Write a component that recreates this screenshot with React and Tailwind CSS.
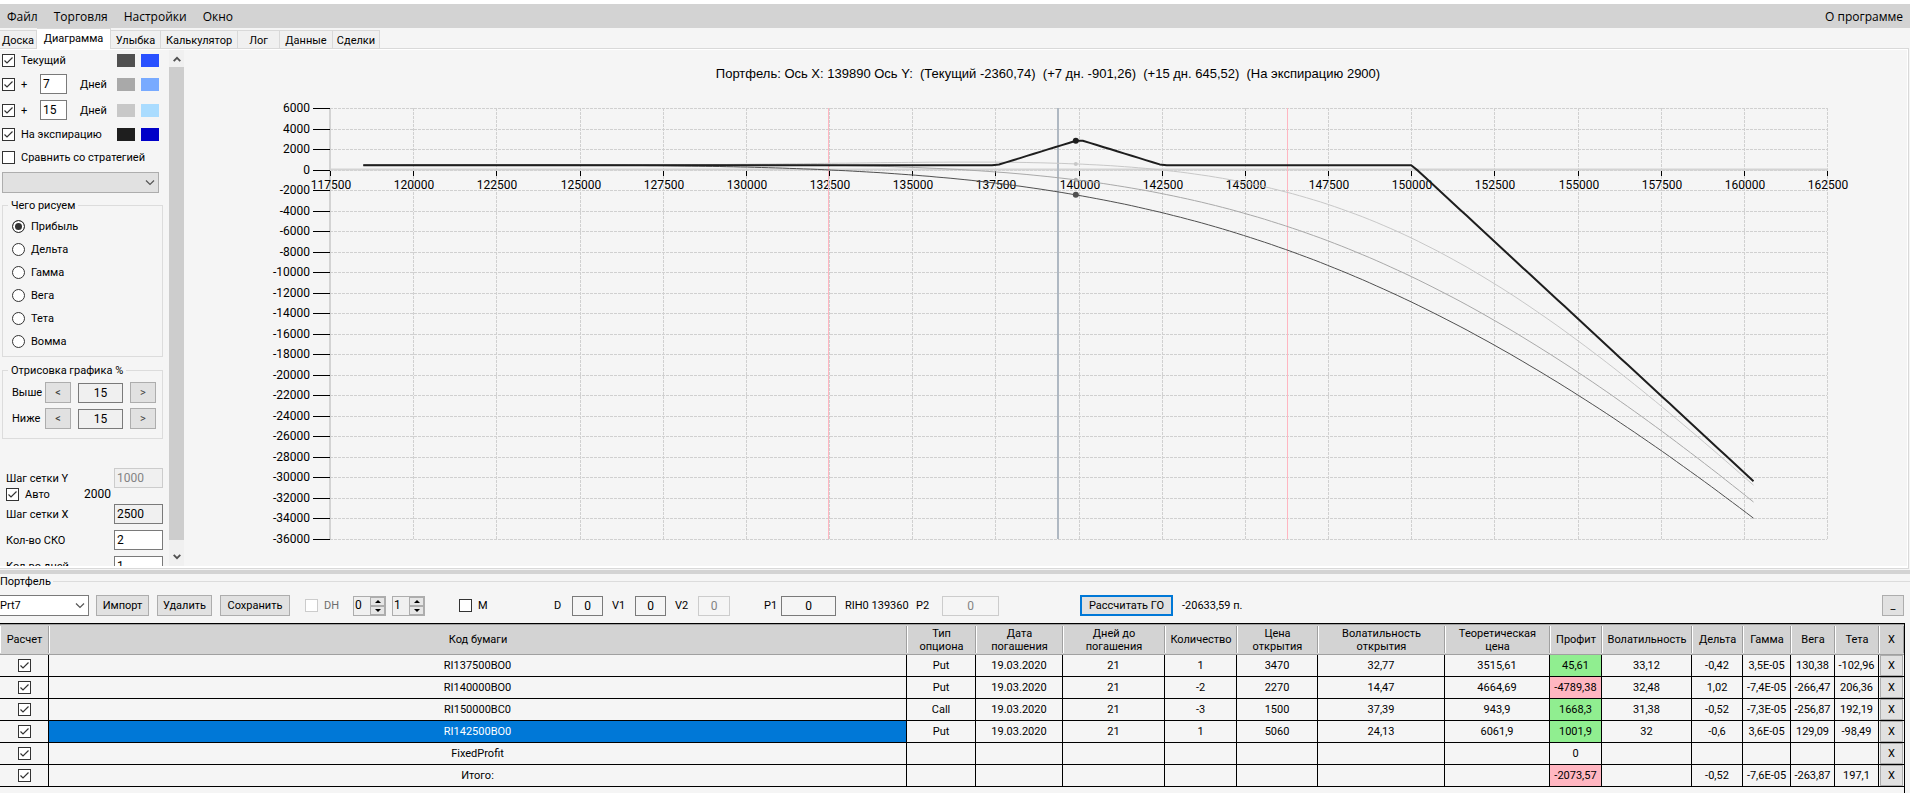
import React from "react";
import clsx from "clsx";

const menu = ["Файл", "Торговля", "Настройки", "Окно"];

const tabs = [
  { title: "Доска", width: "w-[37px]" },
  { title: "Диаграмма", width: "w-[74px]", active: true },
  { title: "Улыбка", width: "w-[50px]" },
  { title: "Калькулятор", width: "w-[77px]" },
  { title: "Лог", width: "w-[42px]" },
  { title: "Данные", width: "w-[53px]" },
  { title: "Сделки", width: "w-[47px]" },
];

const greeks = ["Прибыль", "Дельта", "Гамма", "Вега", "Тета", "Вомма"];

const columns = [
  { title: "Расчет", width: "w-[49px]" },
  { title: "Код бумаги", width: "" },
  { title: "Тип опциона", width: "w-[69px]" },
  { title: "Дата погашения", width: "w-[87px]" },
  { title: "Дней до погашения", width: "w-[102px]" },
  { title: "Количество", width: "w-[72px]" },
  { title: "Цена открытия", width: "w-[81px]" },
  { title: "Волатильность открытия", width: "w-[127px]" },
  { title: "Теоретическая цена", width: "w-[105px]" },
  { title: "Профит", width: "w-[52px]" },
  { title: "Волатильность", width: "w-[90px]" },
  { title: "Дельта", width: "w-[51px]" },
  { title: "Гамма", width: "w-[48px]" },
  { title: "Вега", width: "w-[44px]" },
  { title: "Тета", width: "w-[44px]" },
  { title: "X", width: "w-[25px]" },
];

const PROFIT_COLUMN = 8;

const rows = [
  ["RI137500BO0", "Put", "19.03.2020", "21", "1", "3470", "32,77", "3515,61", "45,61", "33,12", "-0,42", "3,5E-05", "130,38", "-102,96"],
  ["RI140000BO0", "Put", "19.03.2020", "21", "-2", "2270", "14,47", "4664,69", "-4789,38", "32,48", "1,02", "-7,4E-05", "-266,47", "206,36"],
  ["RI150000BC0", "Call", "19.03.2020", "21", "-3", "1500", "37,39", "943,9", "1668,3", "31,38", "-0,52", "-7,3E-05", "-256,87", "192,19"],
  ["RI142500BO0", "Put", "19.03.2020", "21", "1", "5060", "24,13", "6061,9", "1001,9", "32", "-0,6", "3,6E-05", "129,09", "-98,49"],
  ["FixedProfit", "", "", "", "", "", "", "", "0", "", "", "", "", ""],
  ["Итого:", "", "", "", "", "", "", "", "-2073,57", "", "-0,52", "-7,6E-05", "-263,87", "197,1"],
];

const SELECTED_ROW = 3;

const positions = [
  { type: "put", strike: 137500, qty: 1, price: 3470, vol: 0.3312 },
  { type: "put", strike: 140000, qty: -2, price: 2270, vol: 0.3248 },
  { type: "call", strike: 150000, qty: -3, price: 1500, vol: 0.3138 },
  { type: "put", strike: 142500, qty: 1, price: 5060, vol: 0.32 },
];

const normCdf = (x) => {
  const t = 1 / (1 + 0.2316419 * Math.abs(x));
  const poly =
    t * (0.31938153 + t * (-0.356563782 + t * (1.781477937 + t * (-1.821255978 + t * 1.330274429))));
  const tail = 0.3989422804 * Math.exp((-x * x) / 2) * poly;
  return x >= 0 ? 1 - tail : tail;
};

// Black-76, zero rate
const optionPrice = ({ type, strike, vol }, f, days) => {
  const intrinsic = type === "call" ? Math.max(f - strike, 0) : Math.max(strike - f, 0);
  if (days === 0) return intrinsic;
  const sd = vol * Math.sqrt(days / 365);
  const d1 = Math.log(f / strike) / sd + sd / 2;
  const call = f * normCdf(d1) - strike * normCdf(d1 - sd);
  return type === "call" ? call : call - f + strike;
};

const profit = (f, days) =>
  positions.reduce((sum, p) => sum + p.qty * (optionPrice(p, f, days) - p.price), 0);

const CURSOR = 139890;
const X_MIN = 117500;
const X_MAX = 162500;
const LEFT = 145;
const RIGHT = 1642;
const TOP = 58;
const BOTTOM = 489;

const sx = (v) => LEFT + ((v - X_MIN) / (X_MAX - X_MIN)) * (RIGHT - LEFT);
const sy = (v) => TOP + ((6000 - v) / 42000) * (BOTTOM - TOP);

const curvePath = (days) =>
  Array.from({ length: 200 }, (_, i) => {
    const x = 118470 + i * 210;
    return `${i === 0 ? "M" : "L"}${sx(x).toFixed(1)} ${sy(profit(x, days)).toFixed(1)}`;
  }).join(" ");

const curves = [
  { days: 6, color: "#c8c8c8", width: 1, dot: 2 },
  { days: 14, color: "#a9a9a9", width: 1, dot: 2 },
  { days: 21, color: "#505050", width: 1, dot: 3 },
  { days: 0, color: "#1e1e1e", width: 2, dot: 3 },
];

const xTicks = Array.from({ length: 19 }, (_, i) => X_MIN + i * 2500);
const yTicks = Array.from({ length: 22 }, (_, i) => 6000 - i * 2000);

const Chart = () => (
  <svg viewBox="0 0 1722 516" className="w-full h-full block text-[12px]">
    <text x="863" y="28" textAnchor="middle" className="font-['Liberation_Sans',sans-serif] text-[13px] whitespace-pre">
      {"Портфель: Ось X: 139890 Ось Y:  (Текущий -2360,74)  (+7 дн. -901,26)  (+15 дн. 645,52)  (На экспирацию 2900)"}
    </text>

    <g stroke="#d0d0d0" strokeDasharray="3 1" shapeRendering="crispEdges">
      {yTicks.map((v) => (
        <line key={v} x1={LEFT} x2={RIGHT} y1={Math.round(sy(v)) + 0.5} y2={Math.round(sy(v)) + 0.5} />
      ))}
      {xTicks.map((v) => (
        <line key={v} x1={Math.round(sx(v)) + 0.5} x2={Math.round(sx(v)) + 0.5} y1={TOP} y2={BOTTOM} />
      ))}
    </g>
    <g stroke="#d3d3d3" strokeWidth="2">
      <line x1={LEFT} x2={LEFT} y1={TOP} y2={BOTTOM} />
      <line x1={LEFT} x2={RIGHT} y1={sy(0)} y2={sy(0)} />
    </g>

    <g stroke="#000" shapeRendering="crispEdges">
      {yTicks.map((v) => (
        <line key={v} x1={LEFT - 17} x2={LEFT} y1={Math.round(sy(v)) + 0.5} y2={Math.round(sy(v)) + 0.5} />
      ))}
      {xTicks.map((v) => (
        <line key={v} x1={Math.round(sx(v)) + 0.5} x2={Math.round(sx(v)) + 0.5} y1="121" y2="126" />
      ))}
    </g>
    {yTicks.map((v) => (
      <text key={v} x="125" y={Math.round(sy(v)) + 4} textAnchor="end">{v}</text>
    ))}
    {xTicks.map((v) => (
      <text key={v} x={Math.round(sx(v)) + 1} y="139" textAnchor="middle">{v}</text>
    ))}

    {/* current price and the SKO band */}
    <line x1="873" x2="873" y1={TOP} y2={BOTTOM} stroke="#afb8c2" strokeWidth="2" />
    <g stroke="#ffb6c1" shapeRendering="crispEdges">
      <line x1="643.5" x2="643.5" y1={TOP} y2={BOTTOM} />
      <line x1="1102.5" x2="1102.5" y1={TOP} y2={BOTTOM} />
    </g>

    <g transform="translate(1 1)">
      {curves.map((c) => (
        <g key={c.days}>
          <path d={curvePath(c.days)} fill="none" stroke={c.color} strokeWidth={c.width} strokeLinejoin="round" />
          <circle cx={sx(CURSOR)} cy={sy(profit(CURSOR, c.days))} r={c.dot} fill={c.color} />
        </g>
      ))}
    </g>
  </svg>
);

const CheckBox = ({ checked, disabled, ...rest }) => (
  <span className="relative flex w-[13px] h-[13px] flex-shrink-0">
    <input
      type="checkbox"
      defaultChecked={checked}
      disabled={disabled}
      className="peer appearance-none w-[13px] h-[13px] bg-white border border-[#333] disabled:border-[#ccc]"
      {...rest}
    />
    <svg viewBox="0 0 13 13" className="absolute inset-0 hidden peer-checked:block pointer-events-none">
      <path d="M2.5 6.5 L5 9 L10.5 3.5" fill="none" stroke="#333" strokeWidth="1.2" />
    </svg>
  </span>
);

const Chevron = ({ up, className }) => (
  <svg viewBox="0 0 10 6" className={clsx("w-[10px] h-[6px] pointer-events-none", up && "rotate-180", className)}>
    <path d="M1 0.5 L5 4.5 L9 0.5" fill="none" stroke="currentColor" strokeWidth="1.2" />
  </svg>
);

const ScrollArrow = ({ up }) => (
  <svg viewBox="0 0 8 6" className={clsx("w-2 h-[6px]", up && "rotate-180")}>
    <path d="M0.7 0.8 L4 4.2 L7.3 0.8" fill="none" stroke="currentColor" strokeWidth="1.8" />
  </svg>
);

const TextBox = ({ className, ...rest }) => (
  <input
    type="text"
    className={clsx(
      "h-5 border border-[#7a7a7a] text-[12px] disabled:border-[#ccc] disabled:text-[#838383]",
      className
    )}
    {...rest}
  />
);

const Button = ({ className, children, ...rest }) => (
  <button className={clsx("h-[21px] bg-[#e1e1e1] border border-[#adadad] leading-none", className)} {...rest}>
    {children}
  </button>
);

const Swatches = ({ colors }) => (
  <span className="ml-auto mr-1 flex gap-[6px]">
    {colors.map((c) => (
      <span key={c} className="w-[18px] h-[13px]" style={{ background: c }} />
    ))}
  </span>
);

const DaysRow = ({ value, colors }) => (
  <div className="flex items-center h-[26px]">
    <label className="flex items-center w-[38px] gap-[6px]">
      <CheckBox checked /> +
    </label>
    <TextBox defaultValue={value} aria-label="Дней" className="w-[27px] bg-white pl-[2px]" />
    <span className="ml-[13px]">Дней</span>
    <Swatches colors={colors} />
  </div>
);

const PercentRow = ({ title }) => (
  <div className="flex items-center">
    <span className="w-[33px]">{title}</span>
    <Button className="w-[26px] text-[#444]" aria-label={`${title}: меньше`}>&lt;</Button>
    <TextBox defaultValue="15" aria-label={title} className="w-[45px] mx-[7px] text-center bg-[#f0f0f0]" />
    <Button className="w-[26px] text-[#444]" aria-label={`${title}: больше`}>&gt;</Button>
  </div>
);

const Sidebar = () => (
  <div className="flex w-[185px] flex-shrink-0 overflow-hidden">
    <div className="w-[169px] pl-[2px] pr-[6px] overflow-hidden">
      <div className="flex items-center h-[21px]">
        <label className="flex items-center gap-[6px]"><CheckBox checked /> Текущий</label>
        <Swatches colors={["#505050", "#2850ff"]} />
      </div>
      <DaysRow value="7" colors={["#a9a9a9", "#78aaff"]} />
      <DaysRow value="15" colors={["#c8c8c8", "#aadcff"]} />
      <div className="flex items-center h-[22px]">
        <label className="flex items-center gap-[6px]"><CheckBox checked /> На экспирацию</label>
        <Swatches colors={["#1e1e1e", "#0000c8"]} />
      </div>
      <label className="flex items-center gap-[6px] h-6 mb-[3px] whitespace-nowrap">
        <CheckBox /> Сравнить со стратегией
      </label>
      <div className="relative w-[157px]">
        <select aria-label="Стратегия" className="appearance-none block w-full h-[21px] bg-[#e1e1e1] border border-[#adadad]" />
        <Chevron className="absolute right-1 top-2 text-[#555]" />
      </div>

      <fieldset className="mt-[6px] border border-[#dcdcdc] pl-[9px] pt-1 pb-[3px]">
        <legend className="-ml-1 px-[3px] h-3 leading-[14px]">Чего рисуем</legend>
        {greeks.map((g, i) => (
          <label key={g} className="flex items-center gap-[6px] h-[23px]">
            <input
              type="radio"
              name="greek"
              defaultChecked={i === 0}
              className="appearance-none w-[13px] h-[13px] rounded-full border border-[#333] bg-white checked:bg-[#333] checked:shadow-[inset_0_0_0_2px_white]"
            />
            {g}
          </label>
        ))}
      </fieldset>

      <fieldset className="mt-[7px] border border-[#dcdcdc] pl-[9px] pt-[6px] pb-[9px]">
        <legend className="-ml-1 px-[3px] h-3 leading-[14px]">Отрисовка графика %</legend>
        <div className="flex flex-col gap-[5px]">
          <PercentRow title="Выше" />
          <PercentRow title="Ниже" />
        </div>
      </fieldset>

      <div className="mt-[29px] pl-1">
        <label className="flex items-center justify-between">
          Шаг сетки Y
          <TextBox defaultValue="1000" disabled className="w-[49px] pl-[2px] bg-[#f0f0f0]" />
        </label>
        <div className="flex items-center h-[13px] mb-[3px]">
          <label className="flex items-center gap-[6px] w-[78px]"><CheckBox checked /> Авто</label>
          <span className="text-[12px]">2000</span>
        </div>
        <div className="flex flex-col gap-[6px]">
          <label className="flex items-center justify-between">
            Шаг сетки X
            <TextBox defaultValue="2500" className="w-[49px] pl-[2px] bg-[#f0f0f0]" />
          </label>
          <label className="flex items-center justify-between">
            Кол-во СКО
            <TextBox defaultValue="2" className="w-[49px] pl-[2px] bg-white" />
          </label>
          <label className="flex items-center justify-between">
            Кол-во дней
            <TextBox defaultValue="1" className="w-[49px] pl-[2px] bg-white" />
          </label>
        </div>
      </div>
    </div>

    <div className="w-[15px] flex flex-col items-center bg-[#f0f0f0] text-[#505050]">
      <div className="h-[17px] flex items-center"><ScrollArrow up /></div>
      <div className="flex-1 w-full bg-[#cdcdcd]" />
      <div className="h-[26px] flex items-center pt-2"><ScrollArrow /></div>
    </div>
  </div>
);

const Spinner = ({ value, label, className }) => (
  <div className={clsx("flex w-[33px] h-5 border border-[#adadad]", className)}>
    <input type="text" defaultValue={value} aria-label={label} className="w-4 pl-px text-[12px] bg-[#f0f0f0]" />
    <div className="flex-1 flex flex-col bg-[#e6e6e6]">
      {["M4 0 L8 4 H0 Z", "M0 0 H8 L4 4 Z"].map((d, i) => (
        <button
          key={d}
          aria-label={i === 0 ? "Больше" : "Меньше"}
          className="flex-1 flex items-center justify-center border border-[#adadad]"
        >
          <svg viewBox="0 0 8 4" className="w-[6px] h-[3px]"><path d={d} /></svg>
        </button>
      ))}
    </div>
  </div>
);

const Toolbar = () => (
  <div className="flex items-center h-[23px]">
    <div className="relative w-[89px]">
      <select
        aria-label="Портфель"
        className="appearance-none block w-full h-[21px] bg-white border border-l-0 border-[#7a7a7a] text-[11px]"
      >
        <option>Prt7</option>
      </select>
      <Chevron className="absolute right-1 top-2 text-[#555]" />
    </div>
    <Button className="w-[53px] ml-[7px]">Импорт</Button>
    <Button className="w-[55px] ml-2">Удалить</Button>
    <Button className="w-[70px] ml-2">Сохранить</Button>
    <label className="flex items-center gap-[6px] ml-[15px] w-12 text-[#6d6d6d]"><CheckBox disabled /> DH</label>
    <Spinner value="0" label="DH от" />
    <Spinner value="1" label="DH до" className="ml-[6px]" />
    <label className="flex items-center gap-[6px] ml-[34px] w-[95px]"><CheckBox /> M</label>
    <label className="flex items-center justify-between w-[49px]">
      D <TextBox defaultValue="0" className="w-[31px] text-center" />
    </label>
    <label className="flex items-center justify-between w-[54px] ml-[9px]">
      V1 <TextBox defaultValue="0" className="w-[31px] text-center" />
    </label>
    <label className="flex items-center justify-between w-[55px] ml-[9px]">
      V2 <TextBox defaultValue="0" disabled className="w-8 text-center" />
    </label>
    <label className="flex items-center justify-between w-[72px] ml-[34px]">
      P1 <TextBox defaultValue="0" className="w-[55px] text-center" />
    </label>
    <span className="w-[71px] ml-[9px] whitespace-nowrap">RIH0 139360</span>
    <label className="flex items-center justify-between w-[83px]">
      P2 <TextBox defaultValue="0" disabled className="w-[57px] text-center" />
    </label>
    <button className="w-[93px] h-[21px] ml-[81px] bg-[#e1e1e1] border-2 border-[#0078d7] leading-none">
      Рассчитать ГО
    </button>
    <span className="ml-[9px]">-20633,59 п.</span>
    <Button className="w-[22px] ml-auto mr-[6px]" aria-label="Свернуть">_</Button>
  </div>
);

const profitColor = (value) => {
  const n = parseFloat(value);
  if (n > 0) return "bg-[#90ee90]";
  return n < 0 ? "bg-[#ffb6c1]" : "";
};

const PositionsTable = () => (
  <table className="w-full table-fixed border-separate border-spacing-0 text-center">
    <thead>
      <tr className="bg-[#d3d3d3]">
        {columns.map((c, i) => (
          <th key={i} className={clsx("h-[31px] p-0 font-normal leading-[13px] border-t border-b border-[#a0a0a0]", c.width)}>
            <div className="h-[27px] flex items-center justify-center border-l border-r border-l-white border-r-[#a0a0a0] px-1">
              {c.title}
            </div>
          </th>
        ))}
      </tr>
    </thead>
    <tbody>
      {rows.map((row, r) => (
        <tr key={row[0]}>
          <td className="h-[22px] p-0 border-r border-b border-black">
            <div className="flex justify-center">
              <CheckBox checked aria-label={`Расчет ${row[0]}`} />
            </div>
          </td>
          {row.map((cell, i) => (
            <td
              key={i}
              className={clsx(
                "h-[22px] p-0 border-r border-b border-black whitespace-nowrap",
                i === 0 && r === SELECTED_ROW && "bg-[#0078d7] text-white",
                i === PROFIT_COLUMN - 0 && profitColor(cell)
              )}
            >
              {cell}
            </td>
          ))}
          <td className="h-[22px] p-0 border-b border-black">
            <div className="flex justify-center">
              <Button className="w-[23px] h-[19px]" aria-label={`Удалить ${row[0]}`}>X</Button>
            </div>
          </td>
        </tr>
      ))}
    </tbody>
  </table>
);

const App = () => (
  <div className="h-screen flex flex-col overflow-hidden bg-[#f5f5f5] border-t-4 border-white font-[Roboto,sans-serif] text-[11px] leading-[13px] text-black">
    <nav className="h-6 flex items-center gap-4 px-[7px] bg-[#d3d3d3] font-['Open_Sans',sans-serif] text-[12px]">
      {menu.map((m) => (
        <button key={m}>{m}</button>
      ))}
      <button className="ml-auto">О программе</button>
    </nav>

    <div className="flex items-end h-[21px] -mb-px relative" role="tablist">
      {tabs.map((t) => (
        <button
          key={t.title}
          role="tab"
          aria-selected={!!t.active}
          className={clsx(
            "flex items-center whitespace-nowrap justify-center border-t border-r border-[#d9d9d9]",
            t.width,
            t.active ? "h-[21px] bg-white pb-px" : "h-[19px] bg-[#f0f0f0] border-b pt-px"
          )}
        >
          {t.title}
        </button>
      ))}
    </div>

    <main className="flex-1 min-h-0 flex border-t border-r border-b border-[#d9d9d9] mr-px">
      <div className="flex-1 min-w-0 flex border-t border-b-2 border-r border-white">
        <Sidebar />
        <div className="flex-1 min-w-0">
          <Chart />
        </div>
      </div>
    </main>
    <div className="h-1 mt-px bg-[#d3d3d3]" />

    <section>
      <div className="flex items-center h-[14px] mb-[6px]">
        <h2>Портфель</h2>
        <div className="flex-1 h-px ml-[2px] bg-[#dcdcdc]" />
      </div>
      <Toolbar />
      <div className="mt-[6px] mr-[5px] pb-[6px] border-t border-r border-black">
        <PositionsTable />
      </div>
    </section>
  </div>
);

export default App;
